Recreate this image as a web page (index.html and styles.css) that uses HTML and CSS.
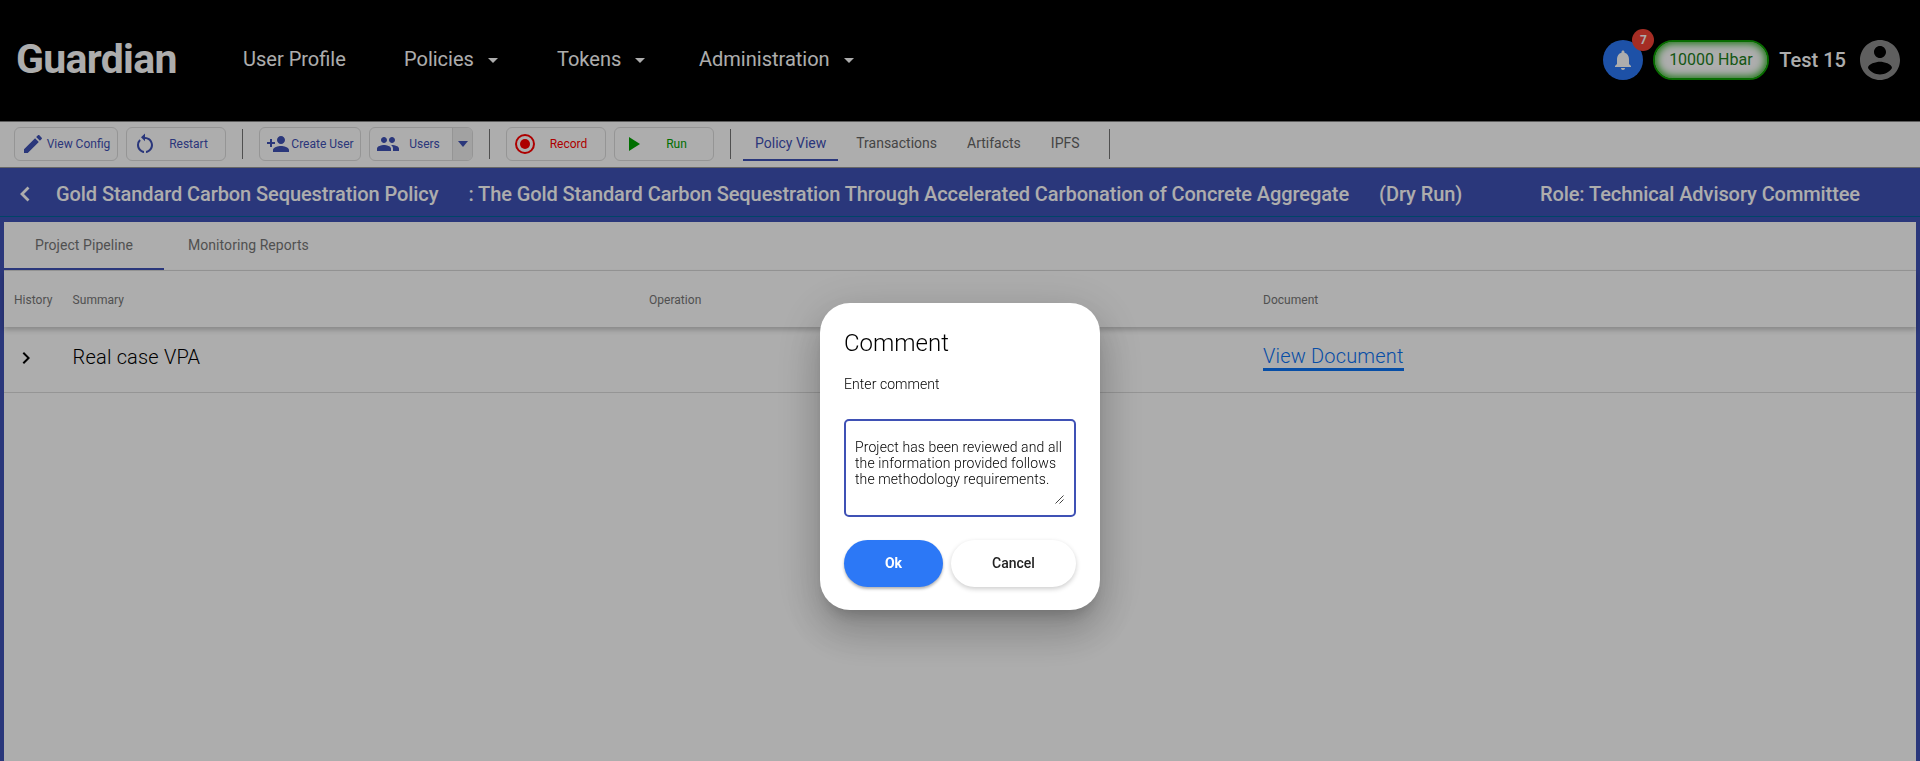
FILE: index.html
```html
<!DOCTYPE html>
<html lang="en">
<head>
<meta charset="utf-8">
<title>Guardian</title>
<link rel="stylesheet" href="styles.css">
</head>
<body>
<header class="header">
  <div class="brand">Guardian</div>
  <nav class="nav">
    <a class="nav-item nav-profile">User Profile</a>
    <a class="nav-item nav-policies">Policies<i class="caret"></i></a>
    <a class="nav-item nav-tokens">Tokens<i class="caret"></i></a>
    <a class="nav-item">Administration<i class="caret"></i></a>
  </nav>
  <div class="account">
    <div class="bell">
      <svg width="24" height="24" viewBox="0 0 24 24"><path fill="#fff" d="M12 22c1.1 0 2-.9 2-2h-4c0 1.1.89 2 2 2zm6-6v-5c0-3.07-1.64-5.64-4.5-6.32V4c0-.83-.67-1.500-1.500-1.500s-1.500.67-1.500 1.500v.68C7.630 5.360 6 7.920 6 11v5l-2 2v1h16v-1l-2-2z"/></svg>
      <span class="badge">7</span>
    </div>
    <div class="balance">10000 Hbar</div>
    <div class="user">Test 15</div>
    <svg class="avatar" width="48" height="48" viewBox="0 0 24 24"><path fill="#8c8c8c" d="M12 2C6.480 2 2 6.480 2 12s4.480 10 10 10 10-4.480 10-10S17.520 2 12 2zm0 3c1.660 0 3 1.340 3 3s-1.340 3-3 3-3-1.340-3-3 1.340-3 3-3zm0 14.200c-2.500 0-4.710-1.280-6-3.220.03-1.990 4-3.080 6-3.080 1.990 0 5.970 1.090 6 3.080-1.290 1.940-3.500 3.220-6 3.220z"/></svg>
  </div>
</header>

<div class="toolbar">
  <button class="tool tool-config"><svg width="24" height="24" viewBox="0 0 24 24"><path d="M3 17.250V21h3.750L17.810 9.940l-3.750-3.750L3 17.250zM20.710 7.040c.39-.39.39-1.020 0-1.410l-2.340-2.340c-.39-.39-1.020-.39-1.410 0l-1.830 1.830 3.750 3.750 1.830-1.830z"/></svg><span>View Config</span></button>
  <button class="tool"><svg width="24" height="24" viewBox="0 0 24 24"><path d="M12 5V1.500L8 5.300l4 4V7c3.300 0 6 2.700 6 6 0 2.900-2.100 5.300-5 5.900v2.050c4-.5 7-3.850 7-7.950 0-4.400-3.600-8-8-8zM6.350 7.350A7.950 7.950 0 0 0 4 13c0 4.100 3 7.450 7 7.950V18.900c-2.900-.6-5-3-5-5.900 0-1.650.67-3.150 1.760-4.240z"/></svg><span>Restart</span></button>
  <i class="rule"></i>
  <button class="tool tool-create"><svg width="24" height="24" viewBox="0 0 24 24"><path d="M15 12c2.210 0 4-1.790 4-4s-1.790-4-4-4-4 1.790-4 4 1.790 4 4 4zm-9-2V7H4v3H1v2h3v3h2v-3h3v-2H6zm9 4c-2.670 0-8 1.340-8 4v2h16v-2c0-2.660-5.330-4-8-4z"/></svg><span>Create User</span></button>
  <button class="tool tool-users"><svg width="24" height="24" viewBox="0 0 24 24"><path d="M16 11c1.660 0 2.990-1.340 2.990-3S17.660 5 16 5c-1.660 0-3 1.340-3 3s1.340 3 3 3zm-8 0c1.660 0 2.990-1.340 2.990-3S9.660 5 8 5C6.340 5 5 6.340 5 8s1.340 3 3 3zm0 2c-2.330 0-7 1.170-7 3.500V19h14v-2.500c0-2.330-4.670-3.500-7-3.500zm8 0c-.29 0-.62.02-.97.05 1.160.84 1.970 1.970 1.970 3.450V19h6v-2.500c0-2.330-4.670-3.500-7-3.500z"/></svg><span>Users</span><b class="drop"><i></i></b></button>
  <i class="rule"></i>
  <button class="tool tool-record"><svg width="24" height="24" viewBox="0 0 24 24"><circle cx="12" cy="12" r="9" fill="none" stroke="currentColor" stroke-width="2"/><circle cx="12" cy="12" r="5"/></svg><span>Record</span></button>
  <button class="tool tool-run"><svg width="24" height="24" viewBox="0 0 24 24"><path d="M8 5v14l11-7z"/></svg><span>Run</span></button>
  <i class="rule rule-tabs"></i>
  <nav class="views">
    <a class="view active">Policy View</a>
    <a class="view">Transactions</a>
    <a class="view">Artifacts</a>
    <a class="view">IPFS</a>
  </nav>
  <i class="rule rule-end"></i>
</div>

<div class="policy">
  <svg class="back" width="12" height="16" viewBox="0 0 12 16"><path d="M9.500 1.500 3 8l6.500 6.500" fill="none" stroke="#fff" stroke-width="2.800"/></svg>
  <span class="policy-name">Gold Standard Carbon Sequestration Policy</span>
  <span class="policy-topic">: The Gold Standard Carbon Sequestration Through Accelerated Carbonation of Concrete Aggregate</span>
  <span class="policy-mode">(Dry Run)</span>
  <span class="policy-role">Role: Technical Advisory Committee</span>
</div>

<main class="content">
  <div class="tabs">
    <a class="tab tab-active">Project Pipeline</a>
    <a class="tab">Monitoring Reports</a>
  </div>
  <div class="row head">
    <span>History</span><span>Summary</span><span>Operation</span><span>Document</span>
  </div>
  <div class="row item">
    <span><svg class="expand" width="24" height="24" viewBox="0 0 24 24"><path d="M10 6 8.590 7.410 13.170 12l-4.580 4.590L10 18l6-6z"/></svg></span>
    <span class="summary">Real case VPA</span><span></span>
    <span><a class="link">View Document</a></span>
  </div>
</main>

<div class="backdrop">
  <section class="dialog">
    <h1 class="title">Comment</h1>
    <p class="label">Enter comment</p>
    <div class="field">
      <div class="text">Project has been reviewed and all<br>the information provided follows<br>the methodology requirements.</div>
      <svg class="grip" width="9" height="9" viewBox="0 0 9 9"><path d="M.5 8.500l8-8M4.500 8.500l4-4" stroke="#444" fill="none"/></svg>
    </div>
    <div class="actions">
      <button class="btn ok">Ok</button>
      <button class="btn cancel">Cancel</button>
    </div>
  </section>
</div>
</body>
</html>
```
FILE: styles.css
```css
* { box-sizing: border-box; }
body {
  margin: 0;
  height: 761px;
  overflow: hidden;
  display: flex;
  flex-direction: column;
  font-family: Roboto, sans-serif;
  background: #fff;
}
button { font-family: inherit; padding: 0; }
svg { flex: none; }

.header {
  flex: none;
  height: 121px;
  background: #000;
  color: #fff;
  display: flex;
  align-items: center;
  padding: 0 16px 1px 16px;
}
.brand { width: 227px; padding-bottom: 2px; font-size: 41px; font-weight: 700; letter-spacing: -.7px; white-space: nowrap; }
.nav { display: flex; font-size: 20px; padding-bottom: 2px; }
.nav-item { display: flex; align-items: center; white-space: nowrap; }
.nav-profile { width: 161px; }
.nav-policies { width: 153px; }
.nav-tokens { width: 142px; }
.caret { margin: 3px 0 0 14px; border: 5px solid transparent; border-top-color: #fff; border-bottom: 0; }
.account { margin-left: auto; display: flex; align-items: center; }
.bell {
  position: relative;
  width: 40px;
  height: 40px;
  border-radius: 50%;
  background: #2c78f6;
  display: flex;
  align-items: center;
  justify-content: center;
}
.badge {
  position: absolute;
  left: 29px;
  top: -11px;
  width: 22px;
  height: 22px;
  border-radius: 50%;
  background: #f44336;
  font-size: 12px;
  font-weight: 700;
  line-height: 22px;
  text-align: center;
}
.balance {
  margin-left: 10px;
  width: 116px;
  height: 40px;
  padding-right: 1px;
  border: 2px solid #0ca000;
  border-radius: 20px;
  box-shadow: inset 0 0 8px 1px #0ca000;
  background: #fff;
  color: #21801b;
  font-size: 16px;
  line-height: 35px;
  text-align: center;
}
.user { margin-left: 10px; font-size: 20px; font-weight: 500; white-space: nowrap; }
.avatar { margin-left: 10px; }

.toolbar {
  flex: none;
  height: 47px;
  border-top: 1px solid #888;
  border-bottom: 1px solid #999;
  padding: 5px 14px 0;
  display: flex;
  gap: 8px;
}
.tool {
  width: 100px;
  height: 34px;
  border: 1px solid #dcdcdc;
  border-radius: 6px;
  background: #fff;
  color: #3f51b5;
  fill: currentColor;
  font-size: 12px;
  display: flex;
  align-items: center;
  padding-left: 6px;
}
.tool span { flex: 1; text-align: center; white-space: nowrap; padding-right: 5px; }
.tool.tool-create span { padding-right: 5px; }
.tool-config { width: 104px; }
.tool-create { width: 102px; }
.tool-users { width: 104px; }
.tool.tool-users span { padding-right: 3px; }
.drop {
  width: 20px;
  height: 32px;
  border-left: 1px solid #dcdcdc;
  border-radius: 0 5px 5px 0;
  background: #efefef;
  display: flex;
  align-items: center;
  justify-content: center;
}
.drop i { border: 5.500px solid transparent; border-top: 6px solid #3f51b5; border-bottom: 0; }
.tool-record { color: #f00; }
.tool-run { color: #00a400; }
.rule { width: 1px; height: 30px; margin: 2px 8px 0; background: #777; flex: none; }
.rule-tabs { margin-right: 4px; }
.rule-end { margin-left: 3px; }
.views { display: flex; height: 34px; }
.view { padding: 0 12px; margin-right: 6px; font-size: 14px; line-height: 33px; height: 34px; color: #666; white-space: nowrap; }
.active { color: #3f51b5; border-bottom: 2px solid #3f51b5; }

.policy {
  flex: none;
  height: 49px;
  border-bottom: 1px solid #00659a;
  background: #3f51b5;
  color: #fff;
  font-size: 20px;
  font-weight: 500;
  letter-spacing: -.083px;
  display: flex;
  align-items: center;
  padding: 4px 60px 0 19px;
  white-space: nowrap;
}
.policy-name { margin-left: 25px; }
.policy-topic { margin-left: 30px; }
.policy-mode { margin-left: 30px; }
.policy-role { margin-left: auto; }

.content { flex: 1; border: 4px solid #3f51b5; border-top-width: 5px; border-bottom: 0; }
.tabs { height: 49px; border-bottom: 1px solid #dcdcdc; display: flex; }
.tab { height: 48px; padding: 0 24px; font-size: 14px; line-height: 46px; letter-spacing: .06px; color: #777; min-width: 160px; text-align: center; white-space: nowrap; }
.tab-active { border-bottom: 2px solid #3f51b5; }
.row { display: grid; grid-template-columns: 58.600px 576.400px 614px 1fr; padding-left: 10px; align-items: center; }
.head { height: 56px; padding-top: 2px; font-size: 12px; letter-spacing: .03px; color: #777; box-shadow: 0 3px 5px rgba(0,0,0,.22); }
.item { height: 66px; padding-bottom: 4px; border-bottom: 1px solid #dcdcdc; font-size: 20px; font-weight: 300; letter-spacing: .18px; color: #000; }
.summary { padding-bottom: 2px; }
.expand { display: block; }
.link { display: inline-block; line-height: 23px; color: #0b73f5; border-bottom: 3px solid #0b73f5; }

.backdrop {
  position: fixed;
  inset: 0;
  background: rgba(0,0,0,.32);
  display: flex;
  align-items: flex-start;
  justify-content: center;
  padding-top: 303px;
}
.dialog {
  width: 280px;
  height: 307px;
  padding: 24px;
  border-radius: 30px;
  background: #fff;
  box-shadow: 0 11px 15px -7px rgba(0,0,0,.2), 0 24px 38px 3px rgba(0,0,0,.14), 0 9px 46px 8px rgba(0,0,0,.12);
  color: rgba(0,0,0,.87);
}
.title { margin: 0; font-size: 24px; font-weight: 300; line-height: 32px; color: #000; }
.label { margin: 17px 0 0; font-size: 14px; font-weight: 300; line-height: 16px; letter-spacing: .06px; color: #000; }
.field { position: relative; margin-top: 27px; height: 98px; border: 2px solid #3f51b5; border-radius: 5px; padding: 18px 9px; }
.text { font-size: 14px; font-weight: 300; line-height: 16px; letter-spacing: .1px; color: #000; white-space: nowrap; }
.grip { position: absolute; right: 10px; bottom: 11px; }
.actions { display: flex; gap: 8px; margin-top: 23px; }
.btn { height: 47px; border: 0; border-radius: 24px; font-size: 14px; font-weight: 500; padding-bottom: 2px; }
.ok { width: 99px; background: #2c78f6; color: #fff; font-weight: 700; box-shadow: 0 2px 3px rgba(0,0,0,.3); }
.cancel { width: 125px; background: #fff; color: #222; box-shadow: 0 2px 5px rgba(0,0,0,.2); }
```
